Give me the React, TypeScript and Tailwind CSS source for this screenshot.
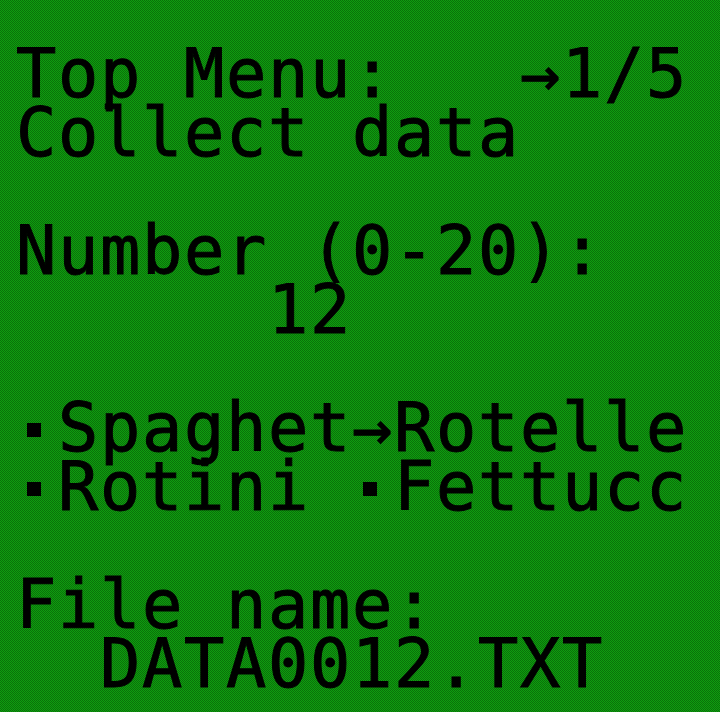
const rows: (string | { bullet: true })[][] = [
  ['Top Menu:   →1/5'],
  ['Collect data'],
  [''],
  ['Number (0-20):'],
  ['      12'],
  [''],
  [{ bullet: true }, 'Spaghet→Rotelle'],
  [{ bullet: true }, 'Rotini ', { bullet: true }, 'Fettucc'],
  [''],
  ['File name:'],
  ['  DATA0012.TXT'],
]

function Bullet() {
  // square dot drawn like the LCD's 2x2 pixel bullet
  return <span className="inline-block w-[14px] h-[14px] ml-[11px] mr-[17px] mb-[14px] bg-black" />
}

export default function App() {
  return (
    <div className="w-[720px] h-[712px] overflow-hidden bg-[repeating-conic-gradient(#109c10_0%_25%,#097209_0%_50%)] bg-[length:2px_2px]">
      <div
        className="pt-[45px] pl-[16px] text-black text-[67px] leading-[59px] tracking-[1.66px] [-webkit-text-stroke:1px_black]"
        style={{ fontFamily: '"DejaVu Sans Mono", "Liberation Mono", monospace' }}
      >
        {rows.map((row, i) => (
          <div key={i} className="h-[59px] whitespace-pre">
            {row.map((part, j) =>
              typeof part === 'string' ? <span key={j}>{part}</span> : <Bullet key={j} />
            )}
          </div>
        ))}
      </div>
    </div>
  )
}
